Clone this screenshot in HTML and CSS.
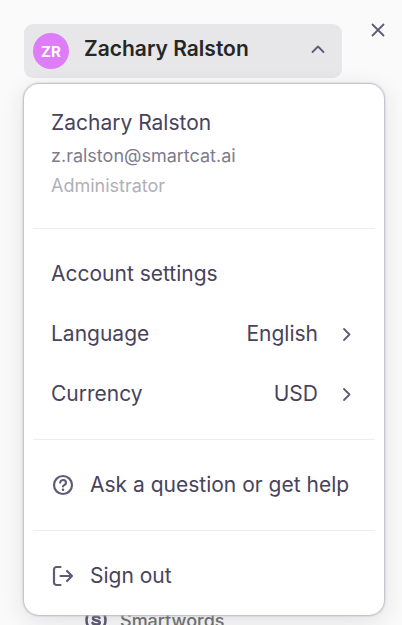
FILE: index.html
```html
<!DOCTYPE html>
<html lang="en">
<head>
<meta charset="utf-8">
<meta name="viewport" content="width=device-width, initial-scale=1">
<title>Account menu</title>
<link rel="stylesheet" href="styles.css">
</head>
<body>
<div class="sidebar">
  <header class="topbar">
    <div class="account">
      <button class="account-toggle" type="button" aria-expanded="true" aria-controls="account-menu">
        <span class="avatar">ZR</span>
        <span class="account-name">Zachary Ralston</span>
        <svg class="icon" viewBox="0 0 18 18" aria-hidden="true"><path d="M3.500 10 9 4.500l5.500 5.500"/></svg>
      </button>
    </div>
    <button class="close" type="button" aria-label="Close"><svg class="icon" viewBox="0 0 18 18" aria-hidden="true"><path d="M3.500 3.500l11 11M14.500 3.500l-11 11"/></svg></button>
  </header>

  <div class="menu" id="account-menu">
    <section class="profile">
      <p class="profile-name">Zachary Ralston</p>
      <p class="profile-email">z.ralston@smartcat.ai</p>
      <p class="profile-role">Administrator</p>
    </section>
    <hr>
    <button class="item" type="button">Account settings</button>
    <button class="item" type="button">
      <span class="label">Language</span><span>English</span>
      <svg class="icon chevron" viewBox="0 0 18 18" aria-hidden="true"><path d="M5 4l5.500 5.500L5 15"/></svg>
    </button>
    <button class="item" type="button">
      <span class="label">Currency</span><span>USD</span>
      <svg class="icon chevron" viewBox="0 0 18 18" aria-hidden="true"><path d="M5 4l5.500 5.500L5 15"/></svg>
    </button>
    <hr>
    <button class="item" type="button">
      <svg class="icon lead" viewBox="0 0 24 24" aria-hidden="true"><circle cx="12" cy="12" r="9"/><path d="M9.200 9.600a2.900 2.600 0 1 1 4.500 2.200c-1.100 .6-1.700 .9-1.700 1.700"/><circle class="dot" cx="12" cy="16.700" r="1.300"/></svg>
      <span>Ask a question or get help</span>
    </button>
    <hr>
    <button class="item" type="button">
      <svg class="icon lead" viewBox="0 0 24 24" aria-hidden="true"><path d="M9.500 3H5.500A2.500 2.500 0 0 0 3 5.500v13A2.500 2.500 0 0 0 5.500 21H9.500M9.500 12H21M16 7l5 5-5 5"/></svg>
      <span>Sign out</span>
    </button>
  </div>

  <nav class="nav">
    <a class="nav-link" href="#smartwords">
      <svg class="icon nav-icon" viewBox="0 0 24 24" aria-hidden="true"><path d="M5.500 4C1.500 8.500 1.500 15.500 5.500 20M18.500 4c4 4.500 4 11.500 0 16M15.500 10c-1-2-6.500-2-6.500.4 0 2.600 6.800 1.500 6.800 4.200 0 2.500-6 2.500-7.300.2"/></svg>
      <span>Smartwords</span>
    </a>
  </nav>
</div>
</body>
</html>
```

FILE: styles.css
```css
* {
  box-sizing: border-box;
}

body {
  margin: 0;
  background: #fafafa;
  color: #48435c;
  font-family: Inter, "Liberation Sans", sans-serif;
}

button {
  border: 0;
  background: none;
  font: inherit;
  color: inherit;
  text-align: left;
  cursor: pointer;
}

.sidebar {
  position: relative;
  display: flex;
  flex-direction: column;
  justify-content: space-between;
  height: 100vh;
  overflow: hidden;
}

.icon {
  flex: none;
  display: block;
  width: 18px;
  height: 18px;
  fill: none;
  stroke: #605b75;
  stroke-width: 1.8;
  stroke-linecap: round;
  stroke-linejoin: round;
}

.topbar {
  display: flex;
  align-items: flex-start;
  gap: 27px;
  padding: 24px 15px 0 24px;
}

.account {
  flex: 1;
}

.account-toggle {
  display: flex;
  align-items: center;
  width: 100%;
  height: 54px;
  padding: 0 15px 0 9px;
  border-radius: 9px;
  background: #e7e7e9;
}

.avatar {
  display: grid;
  place-items: center;
  width: 36px;
  height: 36px;
  border-radius: 50%;
  background: #de7df7;
  color: #fff;
  font-size: 15px;
  font-weight: 700;
}

.account-name {
  flex: 1;
  margin-left: 15px;
  padding-bottom: 4px;
  color: #262626;
  font-size: 21px;
  font-weight: 600;
  line-height: 30px;
}

.close {
  margin-top: -3px;
  padding: 0;
}

.menu {
  position: absolute;
  top: 84px;
  left: 24px;
  right: 18px;
  padding: 9px;
  border-radius: 15px;
  background: #fff;
  box-shadow: 0 0 2px 1px #b9b8c3, 0 6px 24px rgba(40, 35, 60, 0.12);
}

.menu hr {
  height: 1px;
  margin: 15px 0;
  border: 0;
  background: #ededee;
}

.profile {
  padding: 15px 18px 12px;
}

.profile p {
  margin: 0;
  font-size: 18px;
  line-height: 30px;
}

.profile .profile-name {
  margin-bottom: 3px;
  font-size: 21px;
}

.profile-email {
  color: #7f7b8e;
}

.profile-role {
  color: #b1afb9;
}

.item {
  display: flex;
  align-items: center;
  width: 100%;
  height: 60px;
  padding: 0 18px;
  font-size: 21px;
  line-height: 30px;
}

.label {
  flex: 1;
}

.chevron {
  margin-left: 21px;
}

.lead {
  width: 24px;
  height: 24px;
  margin-right: 15px;
  stroke-width: 2.2;
}

.dot {
  fill: #605b75;
  stroke: none;
}

.nav {
  height: 17px;
  padding-left: 84px;
}

.nav-link {
  display: flex;
  align-items: center;
  gap: 12px;
  height: 24px;
  color: #737373;
  font-size: 18px;
  font-weight: 500;
  text-decoration: none;
}

.nav-icon {
  width: 24px;
  height: 24px;
  stroke-width: 2.5;
}
```
